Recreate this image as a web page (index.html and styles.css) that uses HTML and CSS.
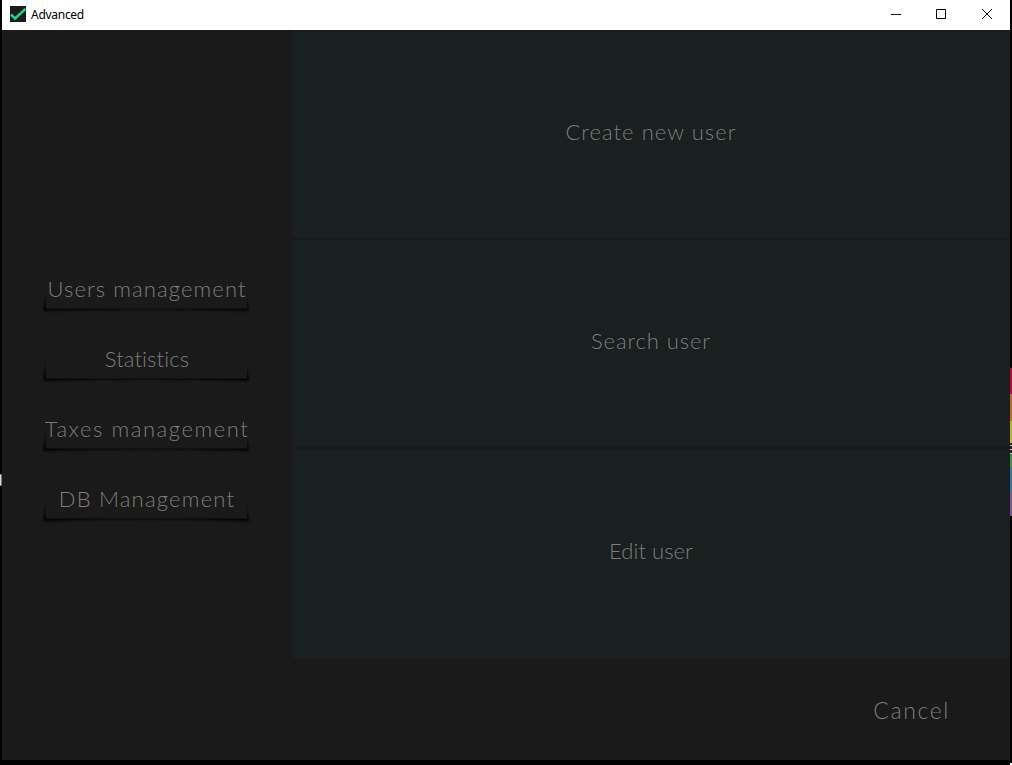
FILE: index.html
```
<!DOCTYPE html>
<html lang="en">
<head>
<meta charset="utf-8">
<title>Advanced</title>
<link rel="stylesheet" href="styles.css">
</head>
<body>
<svg class="defs" width="0" height="0" aria-hidden="true">
  <defs>
    <filter id="soft" x="-10%" y="-50%" width="120%" height="200%"><feGaussianBlur stdDeviation="1.700"/></filter>
    <symbol id="plate" viewBox="0 0 222 44">
      <path d="M13 20 L8 40 Q111 36 214 40 L209 20 Z" fill="#000" filter="url(#soft)"/>
      <path d="M11 0H212V37.500H11Z" fill="#1a1a1a"/>
    </symbol>
  </defs>
</svg>
<div class="window">
  <header class="titlebar">
    <svg class="app-icon" width="16" height="16" viewBox="0 0 16 16"><path d="M0 0H16V16H0Z" fill="#1b1b1b"/><path d="M1 8.500L5 12.500L15.500 3" fill="none" stroke="#20d484" stroke-width="2.500"/></svg>
    <span class="title">Advanced</span>
    <div class="controls">
      <svg width="46" height="29" viewBox="0 0 46 29"><path d="M18 14.500H28" stroke="#000"/></svg>
      <svg width="46" height="29" viewBox="0 0 46 29"><path d="M17.500 9.500H26.500V18.500H17.500Z" fill="none" stroke="#000"/></svg>
      <svg width="46" height="29" viewBox="0 0 46 29"><path d="M17 9L27 19M27 9L17 19" stroke="#000" stroke-width="1"/></svg>
    </div>
  </header>
  <div class="main">
    <nav class="sidebar">
      <div class="button"><svg class="plate"><use href="#plate"/></svg><span class="label users">Users management</span></div>
      <div class="button"><svg class="plate"><use href="#plate"/></svg><span class="label stats">Statistics</span></div>
      <div class="button"><svg class="plate"><use href="#plate"/></svg><span class="label taxes">Taxes management</span></div>
      <div class="button"><svg class="plate"><use href="#plate"/></svg><span class="label db">DB Management</span></div>
    </nav>
    <section class="panels">
      <div class="panel"><span class="label create">Create new user</span></div>
      <div class="panel"><span class="label search">Search user</span></div>
      <div class="panel"><span class="label edit">Edit user</span></div>
    </section>
  </div>
  <footer class="footer"><span class="label cancel">Cancel</span></footer>
</div>
<div class="edge-left"></div>
<div class="edge-right"></div>
<div class="corner"></div>
</body>
</html>
```
FILE: styles.css
```
* { box-sizing: border-box; }
body { margin: 0; width: 1012px; height: 765px; background: #000; overflow: hidden; position: relative; }
.defs { position: absolute; }
.window { width: 1008px; height: 760px; margin-left: 2px; background: #1a1a1a; display: flex; flex-direction: column; }
.titlebar { height: 30px; flex: none; background: #fff; display: flex; align-items: center; padding-left: 8px; }
.app-icon { margin-top: -2px; }
.title { margin-left: 5px; font: 12px/16px "Noto Sans", sans-serif; letter-spacing: -0.28px; color: #000; }
.controls { margin-left: auto; margin-right: -1px; display: flex; height: 29px; align-self: flex-start; }
.controls svg { display: block; }
.main { display: flex; height: 629px; flex: none; }
.sidebar { width: 290px; padding-top: 241px; display: flex; flex-direction: column; gap: 26px; align-items: center; }
.button { width: 222px; height: 44px; display: flex; justify-content: center; position: relative; }
.plate { position: absolute; left: -1px; top: 0; width: 222px; height: 44px; overflow: visible; }
.label { font: 300 22px/36px Lato, sans-serif; color: #7c7c7c; white-space: nowrap; position: relative; }
.panels { width: 718px; display: grid; grid-template-rows: 208px 207px 209px; gap: 2px; background: #181b1b; }
.panel { background: #1a1f1f; display: flex; align-items: center; justify-content: center; padding-bottom: 5px; }
.footer { flex: 1; display: flex; align-items: center; justify-content: flex-end; padding-right: 60px; }
.users { letter-spacing: 1.1px; }
.stats { letter-spacing: 0.1px; }
.taxes { letter-spacing: 1.55px; }
.db { letter-spacing: 1.2px; }
.create { letter-spacing: 1.05px; }
.search { letter-spacing: 0.9px; }
.edit { letter-spacing: 0.05px; }
.cancel { font-size: 23px; letter-spacing: 1.6px; }
.edge-left { position: absolute; left: 0; top: 474px; width: 2px; height: 12px; background: #d8d8d8; border: solid #777; border-width: 1px 1px 1px 0; }
.edge-right { position: absolute; left: 1010px; top: 368px; width: 2px; height: 148px; background: linear-gradient(#c5002f 0 26px, #c36a18 26px 53px, #c0b814 53px 75px, #202020 75px 77px, #b4d5b9 77px 78px, #202020 78px 81px, #c4ddc8 81px 82px, #202020 82px 85px, #b4d5b9 85px 86px, #379643 86px 99px, #237ba5 99px 123px, #77589a 123px); }
.corner { position: absolute; left: 1010px; top: 763px; width: 2px; height: 2px; background: #fff; }
```
